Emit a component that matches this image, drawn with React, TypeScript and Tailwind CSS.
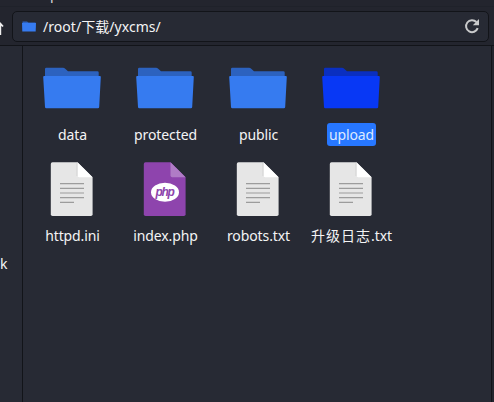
import React from "react";

type Kind = "folder" | "text" | "php";
type Item = { prefix?: string; name: string; kind: Kind; selected?: boolean };

const items: Item[] = [
  { name: "data", kind: "folder" },
  { name: "protected", kind: "folder" },
  { name: "public", kind: "folder" },
  { name: "upload", kind: "folder", selected: true },
  { name: "httpd.ini", kind: "text" },
  { name: "index.php", kind: "php" },
  { name: "robots.txt", kind: "text" },
  { prefix: "升级日志", name: ".txt", kind: "text" },
];

function FolderIcon({ selected }: { selected?: boolean }) {
  return (
    <svg viewBox="0 0 64 64" className="size-16 shrink-0">
      <path
        d="M5 20V12q0-1.300 1.300-1.300H23q1.300 0 2.200 1L28 14.200H57.300q1.400 0 1.400 1.400V20z"
        fill={selected ? "#0a2fc0" : "#2c62bf"}
      />
      <path
        d="M4.200 19H59.800q1.100 0 1 1.100L59.200 50q-.1 1.300-1.300 1.300H6.300q-1.200 0-1.300-1.300L3.200 20.100q-.1-1.100 1-1.100z"
        fill={selected ? "#0838f5" : "#367bf0"}
      />
    </svg>
  );
}

function FileIcon({ php }: { php?: boolean }) {
  return (
    <svg viewBox="0 0 64 64" className="size-16 shrink-0">
      <path
        d="M12.500 4.300H37.500L52.600 19.300V56.300q0 1.700-1.700 1.700H12.500q-1.700 0-1.700-1.700V6q0-1.700 1.700-1.700z"
        fill={php ? "#8e44ad" : "#e6e6e6"}
      />
      <path d="M37.500 4.300L52.600 19.300H39.200q-1.700 0-1.700-1.700z" fill={php ? "#b07cc6" : "#ffffff"} />
      {php ? (
        <>
          <ellipse cx="32" cy="34.300" rx="14" ry="9.500" fill="#fff" />
          <text
            x="31.500"
            y="37.800"
            textAnchor="middle"
            fill="#8e44ad"
            className="font-['Liberation_Sans',sans-serif] text-[12px] font-bold italic tracking-[-1.300px]"
          >
            php
          </text>
        </>
      ) : (
        <>
          <path d="M37 5V18" stroke="#d3d3d3" strokeWidth="1" />
          <path d="M20 25.600H44M20 30.300H44M20 35H44M20 39.700H44M20 44.300H34" stroke="#9c9c9c" strokeWidth="1.200" />
        </>
      )}
    </svg>
  );
}

export default function App() {
  return (
    <div className="flex h-[402px] w-[494px] flex-col overflow-hidden bg-[#272a34] font-['Noto_Sans','Noto_Sans_CJK_SC',sans-serif] text-[14px] text-[#f4f4f4]">
      <div className="h-[7px] shrink-0 overflow-hidden border-b border-[#1f222a] bg-[#23252e] pl-[50px]">
        <div className="-mt-[16px] leading-5 text-[#d5d7db]">p</div>
      </div>
      <div className="flex h-[38px] shrink-0 items-start bg-[#23252e] pt-[4px]">
        <svg viewBox="0 0 12 31" className="h-[31px] w-3 shrink-0">
          <path d="M.3 12.500V24M-3.500 16L.3 12.500L3 15.500" fill="none" stroke="#eeeeee" strokeWidth="1.800" />
        </svg>
        <div className="flex h-[31px] w-[477px] items-center rounded-[5px] border border-[#121419] bg-[#272a34] pr-[8px] pl-[9px]">
          <svg viewBox="0 0 14 11" className="mr-[7px] mb-px h-[11px] w-[14px]">
            <path d="M.5 3V.5H5L6.500 1.500H13.500V3z" fill="#2c62bf" />
            <path d="M0 2H14L13.700 10.500H.3z" fill="#367bf0" />
          </svg>
          <span className="flex-1 whitespace-nowrap leading-5 tracking-[0.050px]">/root/下载/yxcms/</span>
          <svg viewBox="0 0 16 16" className="mb-px size-4">
            <path d="M13.700 10.200A6 6 0 1 1 12.400 4" fill="none" stroke="#c9cacb" strokeWidth="2" />
            <path d="M15 1V7.200H8.800z" fill="#c9cacb" />
          </svg>
        </div>
      </div>
      <div className="flex flex-1 border-t border-[#121419]">
        <aside className="flex w-[23px] shrink-0 items-start border-r border-[#121419] pt-[208px]">
          <span className="leading-5">k</span>
        </aside>
        <main className="w-[469px] shrink-0 border-r border-[#121419] pt-[11px] pl-[2.500px]">
          <div className="grid auto-rows-[101px] grid-cols-[repeat(4,93px)]">
            {items.map((item) => (
              <div key={item.name} className="flex flex-col items-center">
                {item.kind === "folder" ? <FolderIcon selected={item.selected} /> : <FileIcon php={item.kind === "php"} />}
                <span
                  className={`mt-[2px] ml-[1px] flex h-[23px] items-center rounded-[3px] px-[2px] tracking-[-0.100px] whitespace-nowrap ${
                    item.selected ? "bg-[#2777ff] text-[#dce9ff]" : ""
                  }`}
                >
                  {item.prefix && <span className="tracking-[1px]">{item.prefix}</span>}
                  {item.name}
                </span>
              </div>
            ))}
          </div>
        </main>
        <div className="flex-1 bg-[#23252e]" />
      </div>
    </div>
  );
}
